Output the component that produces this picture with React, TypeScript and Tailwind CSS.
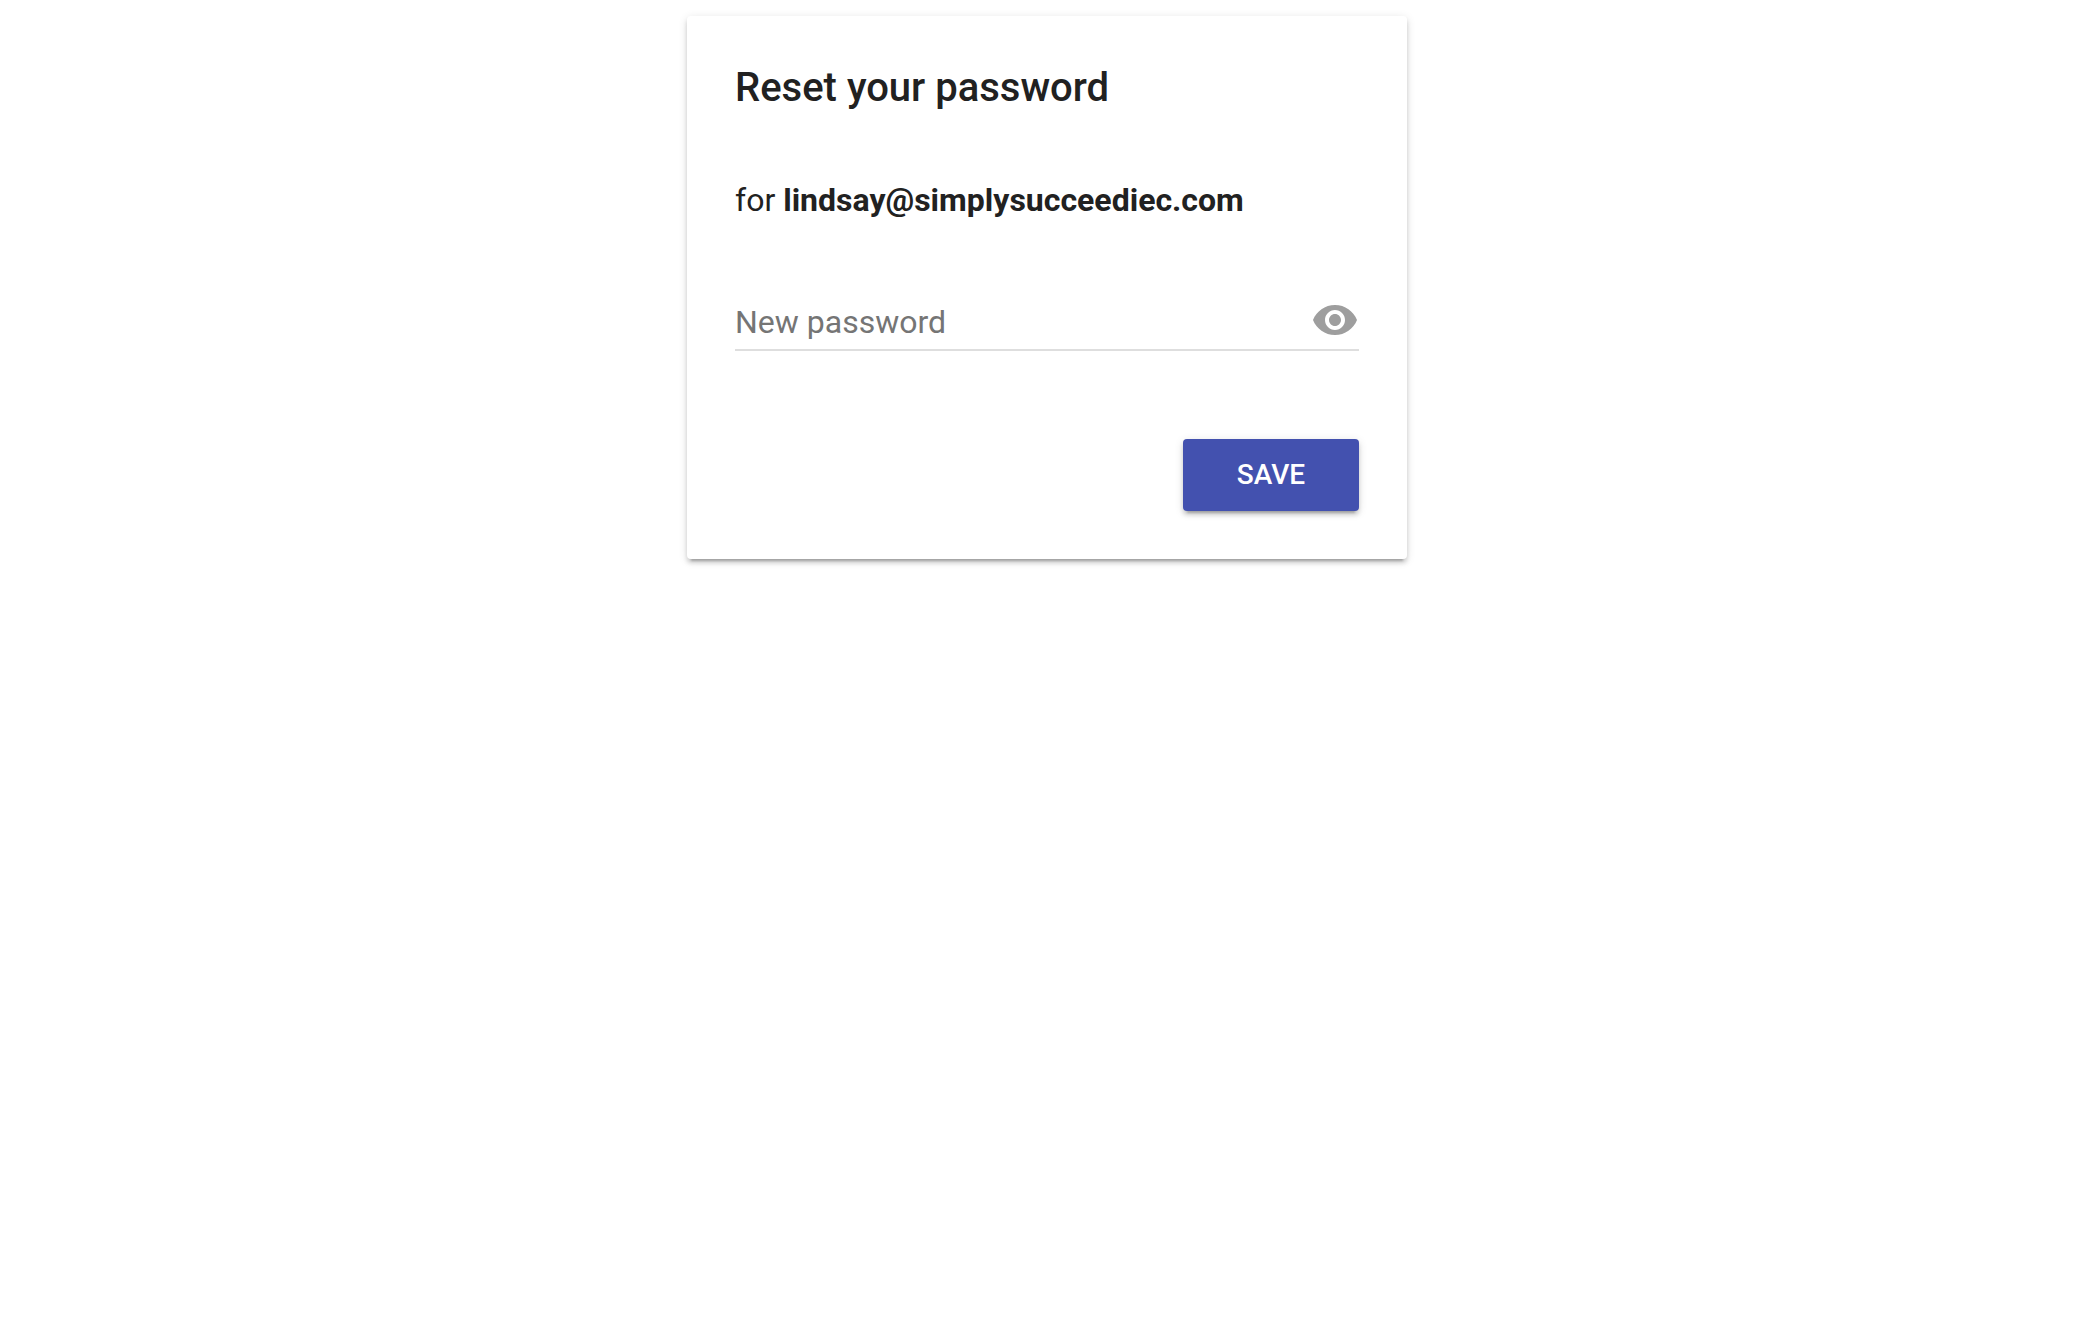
import { FC, useState } from "react";

interface Props {
  email: string;
}

const EyeIcon: FC = () => (
  <svg viewBox="0 0 24 24" className="size-12 fill-[#9e9e9e]" aria-hidden="true">
    <path d="M12 4.5C7 4.5 2.73 7.61 1 12c1.73 4.39 6 7.5 11 7.5s9.27-3.11 11-7.5c-1.73-4.39-6-7.5-11-7.5zM12 17c-2.76 0-5-2.24-5-5s2.24-5 5-5 5 2.24 5 5-2.24 5-5 5zm0-8c-1.66 0-3 1.34-3 3s1.34 3 3 3 3-1.34 3-3-1.34-3-3-3z" />
  </svg>
);

export const ResetPassword: FC<Props> = ({ email }) => {
  const [visible, setVisible] = useState(false);

  return (
    <form
      className="w-full max-w-[720px] rounded-[4px] bg-white p-12 text-[#212121] shadow-[0_4px_4px_0_rgba(0,0,0,0.14),0_6px_2px_-4px_rgba(0,0,0,0.2),0_2px_10px_0_rgba(0,0,0,0.12)]"
      onSubmit={(e) => e.preventDefault()}
    >
      <h1 className="text-[40px] leading-[48px] font-medium">
        Reset your password
      </h1>
      <p className="mt-16 text-[32px] leading-[48px]">
        for <strong className="font-bold">{email}</strong>
      </p>
      <div className="mt-[72px] flex items-start border-b-2 border-[#dedede]">
        <input
          type={visible ? "text" : "password"}
          aria-label="New password"
          placeholder="New password"
          className="min-w-0 flex-1 py-2 text-[32px] leading-[37px] outline-none placeholder:text-[#757575]"
        />
        <button
          type="button"
          aria-label="Show password"
          onClick={() => setVisible(!visible)}
        >
          <EyeIcon />
        </button>
      </div>
      <div className="mt-[88px] flex justify-end">
        <button
          type="submit"
          className="h-[72px] min-w-[176px] rounded-[4px] bg-[#4351af] px-8 text-[28px] leading-[72px] font-medium text-white shadow-[0_4px_4px_0_rgba(0,0,0,0.14),0_6px_2px_-4px_rgba(0,0,0,0.2),0_2px_10px_0_rgba(0,0,0,0.12)]"
        >
          SAVE
        </button>
      </div>
    </form>
  );
};

const App: FC = () => {
  return (
    <main className="flex min-h-screen items-start justify-center bg-white pt-4 font-[Roboto,sans-serif]">
      <ResetPassword email="lindsay@simplysucceediec.com" />
    </main>
  );
};

export default App;
